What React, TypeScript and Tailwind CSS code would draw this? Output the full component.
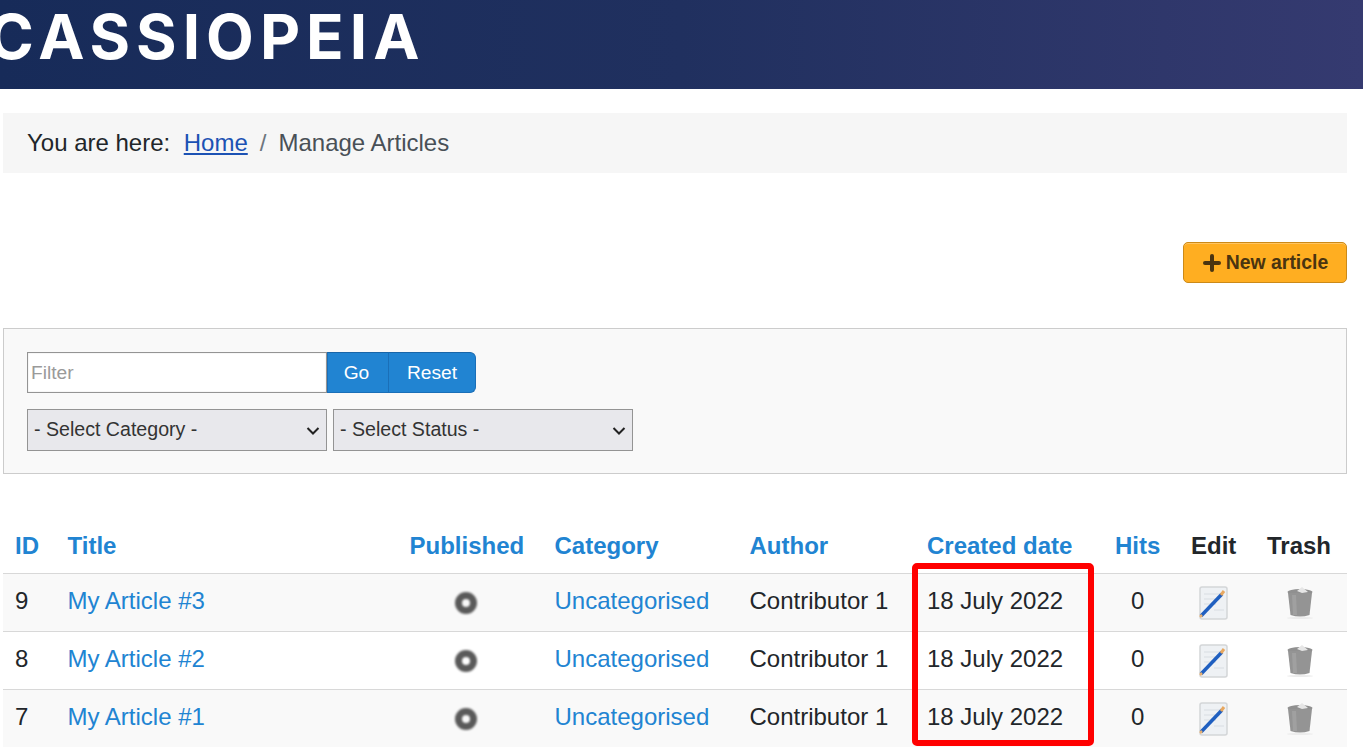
import { Plus } from "lucide-react";

const rows = [
  { id: 9, title: "My Article #3" },
  { id: 8, title: "My Article #2" },
  { id: 7, title: "My Article #1" },
];

function PublishedIcon() {
  return (
    <svg width="24" height="24" viewBox="0 0 24 24" className="mx-auto blur-[0.8px]">
      <circle cx="12" cy="12" r="7.5" fill="none" stroke="#5a5a5a" strokeWidth="7" />
    </svg>
  );
}

function EditIcon() {
  return (
    <svg width="32" height="36" viewBox="0 0 32 36" className="mx-auto blur-[0.5px]">
      <rect x="3" y="2" width="27" height="32" rx="2" fill="#eef1f4" stroke="#d4d6d8" strokeWidth="1.5" />
      <path d="M7 9h18M7 14h16M7 19h12M17 25h10" stroke="#e0e3e7" strokeWidth="1.5" />
      <path d="M4 31 L25 9" stroke="#1f5fc0" strokeWidth="3.5" />
      <path d="M24 10 L27 6" stroke="#e8a860" strokeWidth="3" />
      <path d="M3 32 L5 30" stroke="#e8b070" strokeWidth="2.5" />
    </svg>
  );
}

function TrashIcon() {
  return (
    <svg width="30" height="36" viewBox="0 0 30 36" className="mx-auto blur-[0.7px]">
      <ellipse cx="15" cy="7" rx="12.5" ry="3" fill="#909090" />
      <path d="M3 8 H27 L24.5 30 Q15 33 5.5 30 Z" fill="#949494" />
      <path d="M7 10 H11 L12 30 H8 Z" fill="#a0a0a0" />
      <path d="M12 6 L17 2 L23 7 L17 8 Z" fill="#e6e6e6" />
      <ellipse cx="15" cy="33" rx="13" ry="1" fill="#ececec" />
    </svg>
  );
}

function FilterSelect({ label }: { label: string }) {
  return (
    <div className="relative w-[300px]">
      <select className="h-[42px] w-full appearance-none rounded-none border border-[#949494] bg-[#e8e8ec] pb-[1px] pl-[6px] text-[19.6px] text-[#333]">
        <option>{label}</option>
      </select>
      <svg width="14" height="10" viewBox="0 0 14 10" className="pointer-events-none absolute right-[7px] top-[17px]">
        <path d="M1.5 2 L7 7.5 L12.5 2" fill="none" stroke="#222" strokeWidth="2" />
      </svg>
    </div>
  );
}

export default function App() {
  return (
    <div className="relative h-[753px] overflow-hidden bg-white font-['Liberation_Sans',Arial,sans-serif] text-[24px] text-[#22262a]">
      <header className="flex h-[89px] items-start overflow-hidden bg-gradient-to-r from-[#172b59] via-[#20305f] to-[#353a70]">
        <span className="ml-[-12px] mt-[6px] font-['Inter',sans-serif] text-[62px] font-bold leading-none tracking-[6px] text-white">
          CASSIOPEIA
        </span>
      </header>

      <main className="px-[3px] pr-[16px]">
        <nav className="mt-6 flex h-[60px] items-center bg-[#f6f6f6] pl-6">
          <span>You are here:</span>
          <a href="#" className="ml-[13.5px] text-[#1c52b4] underline">Home</a>
          <span className="ml-3 text-[#6d757e]">/</span>
          <span className="ml-3 text-[#495057]">Manage Articles</span>
        </nav>

        <div className="mt-[69px] flex justify-end">
          <button className="flex h-[41px] w-[164px] items-center justify-center rounded-[5px] border border-[#cc8a18] bg-[#ffae21] pr-[2px] text-[19.4px] font-bold text-[#4a3410] shadow-[inset_0_1px_0_#ffc562]">
            <Plus size={24} strokeWidth={4} className="mr-[2px]" />
            New article
          </button>
        </div>

        <form className="mt-[45px] flex h-[146px] flex-col gap-4 border border-[#ccc] bg-[#f9f9f9] pl-[23px] pt-[23px]">
          <div className="flex h-[41px]">
            <input
              placeholder="Filter"
              className="h-[41px] w-[300px] border border-[#949494] bg-white pl-[3px] text-[19.2px] shadow-[inset_0_0_1px_#aaa] placeholder:text-[#9a9a9a]"
            />
            <button type="button" className="h-[41px] w-[62px] border border-[#1a6fb8] border-t-[#1865a8] bg-[#2184d2] pr-[3px] pt-[1px] text-[19.2px] text-white">Go</button>
            <button type="button" className="h-[41px] w-[87px] rounded-r-[6px] border border-[#1a6fb8] border-l-0 border-t-[#1865a8] bg-[#2184d2] pt-[1px] text-[19.2px] text-white">Reset</button>
          </div>
          <div className="flex gap-[6px]">
            <FilterSelect label="- Select Category -" />
            <FilterSelect label="- Select Status -" />
          </div>
        </form>

        <table className="mt-[45px] w-[1344px] table-fixed border-collapse text-left">
          <thead>
            <tr className="h-[54px] border-b border-[#d8d8d8] font-bold text-[#2184d2]">
              <th className="w-[52.5px] pl-3">ID</th>
              <th className="w-[342px] pl-3">Title</th>
              <th className="w-[145px] pl-3">Published</th>
              <th className="w-[195px] pl-3">Category</th>
              <th className="w-[177.5px] pl-3">Author</th>
              <th className="w-[188px] pl-3">Created date</th>
              <th className="w-[76px] pl-3">Hits</th>
              <th className="w-[76px] pl-3 text-[#22262a]">Edit</th>
              <th className="pl-3 text-[#22262a]">Trash</th>
            </tr>
          </thead>
          <tbody>
            {rows.map((row) => (
              <tr key={row.id} className="h-[58px] border-b border-[#d8d8d8] odd:bg-[#f9f9f9] last:border-b-0">
                <td className="pb-[2px] pl-3">{row.id}</td>
                <td className="pb-[2px] pl-3 text-[#2184d2]">{row.title}</td>
                <td className="pr-[9px] pt-[2px]"><PublishedIcon /></td>
                <td className="pb-[2px] pl-3 text-[#2184d2]">Uncategorised</td>
                <td className="pb-[2px] pl-3">Contributor 1</td>
                <td className="pb-[2px] pl-3">18 July 2022</td>
                <td className="pb-[2px] pl-[28px]">0</td>
                <td className="pr-[8px] pt-[2px]"><EditIcon /></td>
                <td className="pr-[2px] pt-[2px]"><TrashIcon /></td>
              </tr>
            ))}
          </tbody>
        </table>
      </main>

      <div className="pointer-events-none absolute left-[912px] top-[563px] h-[183px] w-[182px] rounded-[5px] border-[6px] border-[#ff0000]" />
    </div>
  );
}
